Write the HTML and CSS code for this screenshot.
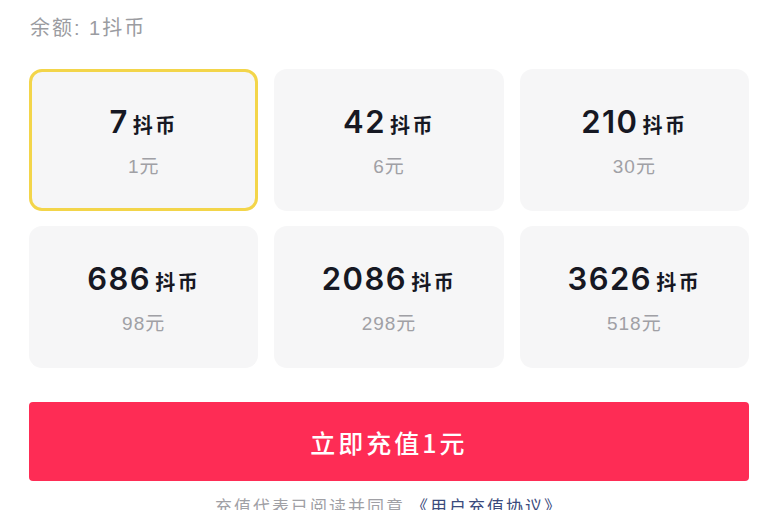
FILE: index.html
```html
<!DOCTYPE html>
<html lang="zh-CN">
<head>
<meta charset="utf-8">
<title>充值</title>
<link rel="stylesheet" href="styles.css">
</head>
<body>
<div class="page">
  <div class="balance">余额: 1抖币</div>
  <div class="grid">
    <div class="card selected">
      <div class="amount"><span class="num">7</span><span class="unit">抖币</span></div>
      <div class="price">1元</div>
    </div>
    <div class="card">
      <div class="amount"><span class="num">42</span><span class="unit">抖币</span></div>
      <div class="price">6元</div>
    </div>
    <div class="card">
      <div class="amount"><span class="num">210</span><span class="unit">抖币</span></div>
      <div class="price">30元</div>
    </div>
    <div class="card">
      <div class="amount"><span class="num">686</span><span class="unit">抖币</span></div>
      <div class="price">98元</div>
    </div>
    <div class="card">
      <div class="amount"><span class="num">2086</span><span class="unit">抖币</span></div>
      <div class="price">298元</div>
    </div>
    <div class="card">
      <div class="amount"><span class="num">3626</span><span class="unit">抖币</span></div>
      <div class="price">518元</div>
    </div>
  </div>
  <button class="pay">立即充值1元</button>
  <div class="agree">充值代表已阅读并同意 <span class="link">《用户充值协议》</span></div>
</div>
</body>
</html>
```
FILE: styles.css
```css
html, body {
  margin: 0;
  padding: 0;
  background: #ffffff;
}
body {
  font-family: "Liberation Sans", "Noto Sans CJK SC", sans-serif;
  overflow: hidden;
}
.page {
  width: 720px;
  padding: 14px 19px 0 29px;
}
.balance {
  margin-left: 1px;
  font-size: 20px;
  line-height: 28px;
  letter-spacing: 2px;
  color: #9b9ca1;
}
.grid {
  margin-top: 27px;
  display: grid;
  grid-template-columns: repeat(3, 1fr);
  grid-auto-rows: 142px;
  column-gap: 16px;
  row-gap: 15px;
}
.card {
  box-sizing: border-box;
  background: #f6f6f7;
  border-radius: 13px;
  padding-top: 5px;
  display: flex;
  flex-direction: column;
  align-items: center;
  justify-content: center;
  gap: 13px;
}
.card.selected {
  border: 3px solid #f3d54a;
}
.amount {
  line-height: 36px;
  height: 36px;
  display: flex;
  align-items: baseline;
  color: #161823;
}
.num {
  font-family: Inter, "Liberation Sans", sans-serif;
  font-weight: 600;
  font-size: 31px;
  letter-spacing: 1.5px;
  line-height: 1;
}
.unit {
  font-family: "Noto Sans CJK SC", sans-serif;
  font-weight: 700;
  font-size: 20px;
  letter-spacing: 2.5px;
  margin-left: 4px;
  line-height: 1;
}
.price {
  font-size: 19px;
  line-height: 24px;
  letter-spacing: 1px;
  color: #a0a0a5;
}
.pay {
  display: block;
  width: 100%;
  height: 79px;
  margin-top: 34px;
  border: none;
  border-radius: 4px;
  background: #fe2c55;
  color: #ffffff;
  font-family: "Noto Sans CJK SC", sans-serif;
  font-weight: 500;
  font-size: 25px;
  letter-spacing: 3px;
  padding: 0;
}
.agree {
  margin-top: 13px;
  text-align: center;
  font-family: "Noto Sans CJK SC", sans-serif;
  font-size: 17px;
  line-height: 24px;
  letter-spacing: 2px;
  color: #a0a0a5;
}
.link {
  color: #3a4a7c;
}
```
